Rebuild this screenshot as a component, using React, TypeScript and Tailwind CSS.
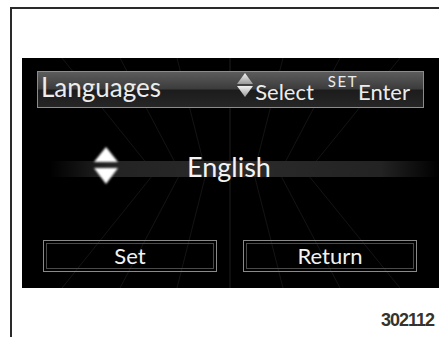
import React from 'react';

const FAN = [40, 98, 155, 261, 318, 378];

function Backdrop() {
  const cx = 208;
  return (
    <svg className="absolute inset-0 pointer-events-none" width="417" height="230" viewBox="0 0 417 230">
      {FAN.map((x) => {
        const mx = cx + (x - cx) * 0.45;
        return (
          <path key={x} d={`M${x} 0 L${mx} 115 L${x} 230`} stroke="#ffffff" strokeOpacity="0.08" strokeWidth="1" fill="none" />
        );
      })}
      <line x1="208" y1="0" x2="208" y2="230" stroke="#ffffff" strokeOpacity="0.12" strokeWidth="1" />
    </svg>
  );
}

function SmallArrows() {
  return (
    <svg width="16" height="25" viewBox="0 0 16 25" className="self-end mb-[5px]">
      <defs>
        <linearGradient id="sa" x1="0" y1="0" x2="0" y2="1">
          <stop offset="0" stopColor="#f2f2f2" />
          <stop offset="1" stopColor="#9a9a9a" />
        </linearGradient>
      </defs>
      <path d="M8 0 L16 11 L0 11 Z" fill="url(#sa)" />
      <path d="M0 13 L16 13 L8 24 Z" fill="url(#sa)" />
    </svg>
  );
}

function BigArrows() {
  return (
    <svg width="30" height="42" viewBox="0 0 30 42">
      <defs>
        <filter id="glow" x="-30%" y="-30%" width="160%" height="160%">
          <feGaussianBlur stdDeviation="1.2" />
        </filter>
      </defs>
      <g filter="url(#glow)" fill="#ffffff">
        <path d="M15 2 L27 17 L3 17 Z" />
        <path d="M3 23 L27 23 L15 39 Z" />
      </g>
    </svg>
  );
}

function ScreenButton({ label }: { label: string }) {
  return (
    <div className="w-[174px] h-[32px] border border-[#8a8a8a] p-[2px]">
      <div className="h-full border border-[#4a4a4a] flex items-center justify-center text-[22px] leading-none text-[#f2f2f2]">
        {label}
      </div>
    </div>
  );
}

export default function App() {
  return (
    <div className="w-[439px] h-[337px] bg-white overflow-hidden" style={{ fontFamily: 'Lato, "Noto Sans", sans-serif' }}>
      <div className="ml-[10px] mt-[7px] h-[330px] border-l-2 border-t-2 border-[#2a2a2a] pl-[10px] pt-[49px]">
        <div className="relative w-[417px] h-[230px] bg-black pt-[13px]">
          <Backdrop />

          <div className="relative mx-[15px] h-[37px] border border-[#8c8c8c] bg-[linear-gradient(to_bottom,#5c5c5c_0%,#3c3c3c_48%,#1c1c1c_52%,#262626_100%)] flex items-center pl-[3px] pr-[13px]">
            <span className="text-[26px] leading-none text-[#ececec] -mt-[6px]">Languages</span>
            <div className="ml-auto h-full flex items-end pb-[4px] text-[22px] leading-none text-[#ececec]">
              <SmallArrows />
              <span className="ml-[2px]">Select</span>
              <span className="ml-[14px] text-[15px] relative -top-[14px] tracking-[1.5px]">SET</span>
              <span>Enter</span>
            </div>
          </div>

          <div className="relative mt-[37px] h-[42px] flex items-center">
            <div className="absolute left-[28px] right-0 top-[16px] h-[16px] bg-[linear-gradient(to_right,transparent_0%,#232323_15%,#2a2a2a_50%,#232323_85%,transparent_100%)]" />
            <div className="relative ml-[69px]">
              <BigArrows />
            </div>
            <span className="relative ml-[66px] text-[27px] leading-none text-[#f4f4f4]">English</span>
          </div>

          <div className="relative mt-[53px] flex gap-[26px] pl-[21px]">
            <ScreenButton label="Set" />
            <ScreenButton label="Return" />
          </div>
        </div>

        <div className="mt-[19px] pr-[5px] text-right text-[18px] font-bold tracking-[-1px] text-[#333]" style={{ fontFamily: '"Liberation Sans", Arial, sans-serif' }}>
          302112
        </div>
      </div>
    </div>
  );
}
